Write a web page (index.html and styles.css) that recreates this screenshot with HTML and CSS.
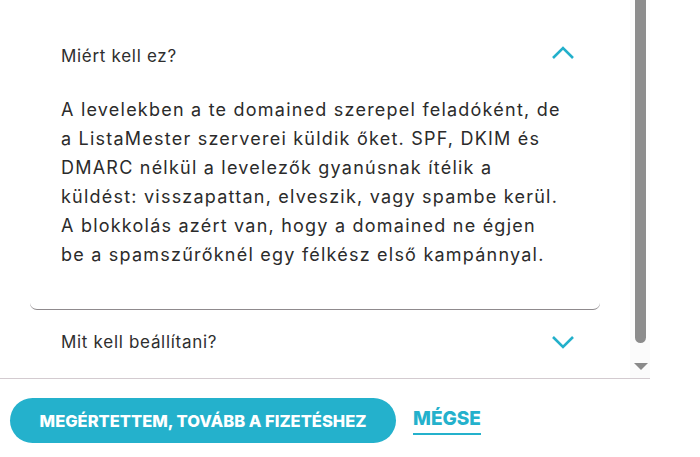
FILE: index.html
```html
<!DOCTYPE html>
<html lang="hu">
<head>
<meta charset="utf-8">
<title>Miért kell ez?</title>
<link rel="stylesheet" href="styles.css">
</head>
<body>
<div class="dialog">
  <div class="scroll">
    <div class="scroll-content">
      <div class="accordion">
        <div class="item open">
          <div class="item-head">
            <span class="item-title">Miért kell ez?</span>
            <svg class="chev" width="24" height="15" viewBox="0 0 24 15"><path d="M2 13 L12 3 L22 13" fill="none" stroke="#23b0cb" stroke-width="2.6"/></svg>
          </div>
          <p class="item-body">A levelekben a te domained szerepel feladóként, de<br>a ListaMester szerverei küldik őket. SPF, DKIM és<br>DMARC nélkül a levelezők gyanúsnak ítélik a<br>küldést: visszapattan, elveszik, vagy spambe kerül.<br>A blokkolás azért van, hogy a domained ne égjen<br>be a spamszűrőknél egy félkész első kampánnyal.</p>
        </div>
        <div class="item">
          <div class="item-head">
            <span class="item-title">Mit kell beállítani?</span>
            <svg class="chev" width="24" height="15" viewBox="0 0 24 15"><path d="M2 2 L12 12 L22 2" fill="none" stroke="#23b0cb" stroke-width="2.6"/></svg>
          </div>
        </div>
      </div>
    </div>
    <div class="scrollbar">
      <div class="thumb"></div>
      <div class="arrow"></div>
    </div>
  </div>
  <div class="actions">
    <button class="btn-primary">MEGÉRTETTEM, TOVÁBB A FIZETÉSHEZ</button>
    <a class="btn-link" href="#">MÉGSE</a>
  </div>
</div>
</body>
</html>
```
FILE: styles.css
```css
html, body {
  margin: 0;
  padding: 0;
  background: #ffffff;
}
body {
  font-family: "Inter", "Noto Sans", sans-serif;
  color: #2b2b2b;
}
.dialog {
  width: 700px;
  height: 457px;
  overflow: hidden;
}
.scroll {
  width: 650px;
  height: 378px;
  border-bottom: 1px solid #d3cbd0;
  display: flex;
  overflow: hidden;
}
.scroll-content {
  width: 630px;
  flex: none;
}
.accordion {
  margin: 0 30px;
}
.item-head {
  display: flex;
  align-items: center;
  justify-content: space-between;
  padding: 0 25px 0 31px;
}
.open .item-head {
  padding-top: 44px;
}
.item-title {
  font-size: 17px;
  line-height: 24px;
  letter-spacing: 0.7px;
  color: #2e2e2e;
}
.open .chev {
  margin-top: -8px;
}
.item:not(.open) .item-head {
  padding-top: 20px;
}
.item:not(.open) .chev {
  margin-top: 1px;
}
.item.open {
  border-bottom: 1px solid #8f8a8d;
  border-radius: 0 0 7px 7px;
}
.item-body {
  margin: 0;
  padding: 27px 10px 40px 31px;
  font-size: 18px;
  line-height: 29px;
  letter-spacing: 1.22px;
  color: #2b2b2b;
}
.scrollbar {
  width: 20px;
  flex: none;
  background: #fbfbfb;
  display: flex;
  flex-direction: column;
  align-items: center;
}
.thumb {
  width: 11px;
  height: 343px;
  background: #8c8c8c;
  border-radius: 0 0 6px 6px;
  margin-left: 1px;
}
.arrow {
  margin-top: 20px;
  margin-left: 1px;
  width: 0;
  height: 0;
  border-left: 7px solid transparent;
  border-right: 7px solid transparent;
  border-top: 7px solid #8a8a8a;
}
.actions {
  display: flex;
  align-items: center;
  padding: 19px 0 0 10px;
}
.btn-primary {
  height: 45px;
  width: 386px;
  border: none;
  border-radius: 23px;
  background: #24b1cc;
  color: #ffffff;
  font-family: "Inter", "Noto Sans", sans-serif;
  font-weight: 800;
  font-size: 16.5px;
  letter-spacing: 0px;
  padding: 0;
}
.btn-link {
  margin-left: 17px;
  color: #24b1cc;
  font-weight: 800;
  font-size: 19px;
  text-decoration: none;
  border-bottom: 2px solid #24b1cc;
  line-height: 24px;
  padding-bottom: 2px;
}
```
